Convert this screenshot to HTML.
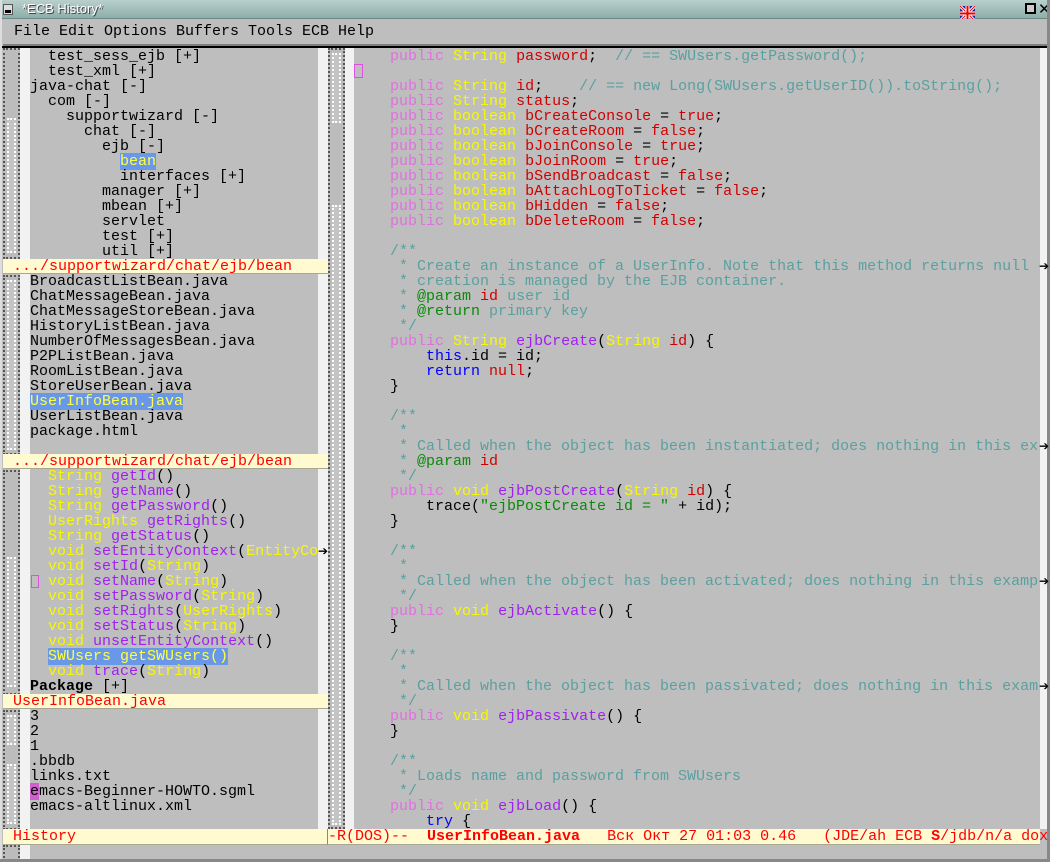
<!DOCTYPE html>
<html><head><meta charset="utf-8">
<style>
*{margin:0;padding:0;box-sizing:border-box}
html,body{width:1050px;height:862px;overflow:hidden;background:#bebebe;font-family:"Liberation Mono","DejaVu Sans Mono",monospace;font-size:15px}
.abs{position:absolute}
pre{font-family:"Liberation Mono","DejaVu Sans Mono",monospace;font-size:15px;line-height:15px;white-space:pre;position:absolute}
.k{color:#e070e0}.t{color:#f8f800}.v{color:#d00000}.c{color:#5aa0a0}.f{color:#a020f0}.b{color:#0000ff}.g{color:#0a8a0a}.n{color:#000}
.hdr{position:absolute;left:3px;width:325px;height:15px;background:#fffad0;color:#f00;line-height:15px;padding-left:10px;border-bottom:1px solid #a8a890}
.sb{position:absolute;width:17px;background:#bcbcbc;border:2px dotted #555}
.thumb{position:absolute;left:2px;width:9px;border:2px dotted #fff;background:#c4c4c4}
.ws{position:absolute;background:#f2f2f2}
.sel{background:#6a98e8;color:#ffff40}
.arr{font-family:"DejaVu Sans",sans-serif;font-weight:bold;font-size:12px;color:#000}
</style></head><body>
<div class="abs" style="left:0;top:0;width:1050px;height:19px;background:linear-gradient(#b8d0cc,#8eaeaa);border-bottom:1px solid #6a8a86"></div>
<div class="abs" style="left:3px;top:4px;width:10px;height:11px;background:#ddd;border:1px solid #555"><div style="position:absolute;left:1px;bottom:1px;width:6px;height:3px;background:#000"></div></div>
<div class="abs" style="left:22px;top:1px;font-size:13px;color:#fff;font-family:'Liberation Sans',sans-serif;text-shadow:1px 1px 0 #444">*ECB History*</div>
<svg class="abs" style="left:960px;top:6px" width="15" height="15" viewBox="0 0 15 15"><rect width="15" height="15" fill="#1030a0"/><path d="M0 0L15 15M15 0L0 15" stroke="#fff" stroke-width="3"/><path d="M0 0L15 15M15 0L0 15" stroke="#e00" stroke-width="1"/><path d="M7.5 0V15M0 7.5H15" stroke="#fff" stroke-width="4"/><path d="M7.5 0V15M0 7.5H15" stroke="#e00" stroke-width="2"/></svg>
<div class="abs" style="left:1025px;top:3px;width:11px;height:11px;border:2px solid #000;background:#ccc"></div>
<div class="abs" style="left:1038px;top:0px;font-size:15px;font-weight:bold;color:#000;font-family:'DejaVu Sans',sans-serif">✕</div>
<div class="abs" style="left:3px;top:19px;width:1044px;height:27px;background:#bebebe;border-bottom:2px solid #808080"></div>
<div class="abs" style="left:14px;top:22px;font-size:15px;line-height:20px;color:#000">File Edit Options Buffers Tools ECB Help</div>
<div class="abs" style="left:0;top:46px;width:1047px;height:2px;background:#000"></div>
<div class="abs" style="left:1047px;top:0;width:3px;height:862px;background:#888"></div>
<div class="abs" style="left:0;top:0;width:2px;height:862px;background:#ddd"></div>

<div class="ws" style="left:20px;top:48px;width:10px;height:796px"></div>
<div class="ws" style="left:318px;top:48px;width:10px;height:796px"></div>
<div class="ws" style="left:344px;top:48px;width:10px;height:781px"></div>
<div class="ws" style="left:1040px;top:48px;width:7px;height:781px"></div>
<div class="ws" style="left:20px;top:845px;width:10px;height:17px"></div>

<div class="sb" style="left:3px;top:48px;height:211px"><div class="thumb" style="top:68px;height:135px"></div></div>
<div class="sb" style="left:3px;top:275px;height:180px"><div class="thumb" style="top:3px;height:170px"></div></div>
<div class="sb" style="left:3px;top:470px;height:225px"><div class="thumb" style="top:85px;height:130px"></div></div>
<div class="sb" style="left:3px;top:710px;height:120px"><div class="thumb" style="top:3px;height:30px"></div><div class="thumb" style="top:52px;height:60px"></div></div>
<div class="sb" style="left:328px;top:48px;height:781px"><div class="thumb" style="top:3px;height:70px"></div><div class="thumb" style="top:155px;height:620px"></div></div>
<div class="sb" style="left:3px;top:845px;height:17px"></div>

<pre style="left:30px;top:49px;color:#000">  test_sess_ejb [+]
  test_xml [+]
java-chat [-]
  com [-]
    supportwizard [-]
      chat [-]
        ejb [-]
          <span style="background:#6a98e8;color:#ffff40">bean</span>
          interfaces [+]
        manager [+]
        mbean [+]
        servlet
        test [+]
        util [+]</pre>
<div class="hdr" style="top:259px">.../supportwizard/chat/ejb/bean</div>
<pre style="left:30px;top:274px;color:#000">BroadcastListBean.java
ChatMessageBean.java
ChatMessageStoreBean.java
HistoryListBean.java
NumberOfMessagesBean.java
P2PListBean.java
RoomListBean.java
StoreUserBean.java
<span class="sel">UserInfoBean.java</span>
UserListBean.java
package.html</pre>
<div class="hdr" style="top:454px">.../supportwizard/chat/ejb/bean</div>
<pre style="left:30px;top:469px;color:#000">  <span class="t">String</span> <span class="f">getId</span>()
  <span class="t">String</span> <span class="f">getName</span>()
  <span class="t">String</span> <span class="f">getPassword</span>()
  <span class="t">UserRights</span> <span class="f">getRights</span>()
  <span class="t">String</span> <span class="f">getStatus</span>()
  <span class="t">void</span> <span class="f">setEntityContext</span>(<span class="t">EntityCo</span>
  <span class="t">void</span> <span class="f">setId</span>(<span class="t">String</span>)
  <span class="t">void</span> <span class="f">setName</span>(<span class="t">String</span>)
  <span class="t">void</span> <span class="f">setPassword</span>(<span class="t">String</span>)
  <span class="t">void</span> <span class="f">setRights</span>(<span class="t">UserRights</span>)
  <span class="t">void</span> <span class="f">setStatus</span>(<span class="t">String</span>)
  <span class="t">void</span> <span class="f">unsetEntityContext</span>()
  <span class="sel">SWUsers getSWUsers()</span>
  <span class="t">void</span> <span class="f">trace</span>(<span class="t">String</span>)
<b>Package</b> [+]</pre>
<div class="abs" style="left:31px;top:575px;width:8px;height:13px;border:1px solid #e050e0"></div>
<div class="hdr" style="top:694px">UserInfoBean.java</div>
<pre style="left:30px;top:709px;color:#000">3
2
1
.bbdb
links.txt
<span style="background:#d060d0">e</span>macs-Beginner-HOWTO.sgml
emacs-altlinux.xml</pre>

<pre style="left:354px;top:49px;color:#000">    <span class="k">public</span> <span class="t">String</span> <span class="v">password</span>;  <span class="c">// == SWUsers.getPassword();</span>

    <span class="k">public</span> <span class="t">String</span> <span class="v">id</span>;    <span class="c">// == new Long(SWUsers.getUserID()).toString();</span>
    <span class="k">public</span> <span class="t">String</span> <span class="v">status</span>;
    <span class="k">public</span> <span class="t">boolean</span> <span class="v">bCreateConsole</span> = <span class="v">true</span>;
    <span class="k">public</span> <span class="t">boolean</span> <span class="v">bCreateRoom</span> = <span class="v">false</span>;
    <span class="k">public</span> <span class="t">boolean</span> <span class="v">bJoinConsole</span> = <span class="v">true</span>;
    <span class="k">public</span> <span class="t">boolean</span> <span class="v">bJoinRoom</span> = <span class="v">true</span>;
    <span class="k">public</span> <span class="t">boolean</span> <span class="v">bSendBroadcast</span> = <span class="v">false</span>;
    <span class="k">public</span> <span class="t">boolean</span> <span class="v">bAttachLogToTicket</span> = <span class="v">false</span>;
    <span class="k">public</span> <span class="t">boolean</span> <span class="v">bHidden</span> = <span class="v">false</span>;
    <span class="k">public</span> <span class="t">boolean</span> <span class="v">bDeleteRoom</span> = <span class="v">false</span>;

    <span class="c">/**</span>
<span class="c">     * Create an instance of a UserInfo. Note that this method returns null</span>
<span class="c">     * creation is managed by the EJB container.</span>
<span class="c">     * </span><span class="g">@param</span> <span class="v">id</span> <span class="c">user id</span>
<span class="c">     * </span><span class="g">@return</span> <span class="c">primary key</span>
<span class="c">     */</span>
    <span class="k">public</span> <span class="t">String</span> <span class="f">ejbCreate</span>(<span class="t">String</span> <span class="v">id</span>) {
        <span class="b">this</span>.id = id;
        <span class="b">return</span> <span class="v">null</span>;
    }

    <span class="c">/**</span>
<span class="c">     *</span>
<span class="c">     * Called when the object has been instantiated; does nothing in this ex</span>
<span class="c">     * </span><span class="g">@param</span> <span class="v">id</span>
<span class="c">     */</span>
    <span class="k">public</span> <span class="t">void</span> <span class="f">ejbPostCreate</span>(<span class="t">String</span> <span class="v">id</span>) {
        trace(<span class="g">"ejbPostCreate id = "</span> + id);
    }

    <span class="c">/**</span>
<span class="c">     *</span>
<span class="c">     * Called when the object has been activated; does nothing in this examp</span>
<span class="c">     */</span>
    <span class="k">public</span> <span class="t">void</span> <span class="f">ejbActivate</span>() {
    }

    <span class="c">/**</span>
<span class="c">     *</span>
<span class="c">     * Called when the object has been passivated; does nothing in this exam</span>
<span class="c">     */</span>
    <span class="k">public</span> <span class="t">void</span> <span class="f">ejbPassivate</span>() {
    }

    <span class="c">/**</span>
<span class="c">     * Loads name and password from SWUsers</span>
<span class="c">     */</span>
    <span class="k">public</span> <span class="t">void</span> <span class="f">ejbLoad</span>() {
        <span class="b">try</span> {</pre>
<div class="abs" style="left:354px;top:64px;width:9px;height:14px;border:1px solid #e050e0"></div>
<pre class="arr" style="left:1039px;top:259px">➔</pre>
<pre class="arr" style="left:1039px;top:439px">➔</pre>
<pre class="arr" style="left:1039px;top:574px">➔</pre>
<pre class="arr" style="left:1039px;top:679px">➔</pre>
<pre class="arr" style="left:318px;top:544px">➔</pre>

<div class="abs" style="left:3px;top:829px;width:325px;height:16px;background:#fffad0;border-bottom:1px solid #a8a890;border-right:1px solid #888"></div>
<pre style="left:13px;top:829px;color:#f00">History</pre>
<div class="abs" style="left:328px;top:829px;width:712px;height:16px;background:#fffad0;border-bottom:1px solid #a8a890"></div>
<pre style="left:328px;top:829px;color:#f00">-R(DOS)--  <b>UserInfoBean.java</b>   Вск Окт 27 01:03 0.46   (JDE/ah ECB <b>S</b>/jdb/n/a dox</pre>
<div class="abs" style="left:0;top:859px;width:1050px;height:3px;background:#888"></div>
</body></html>
